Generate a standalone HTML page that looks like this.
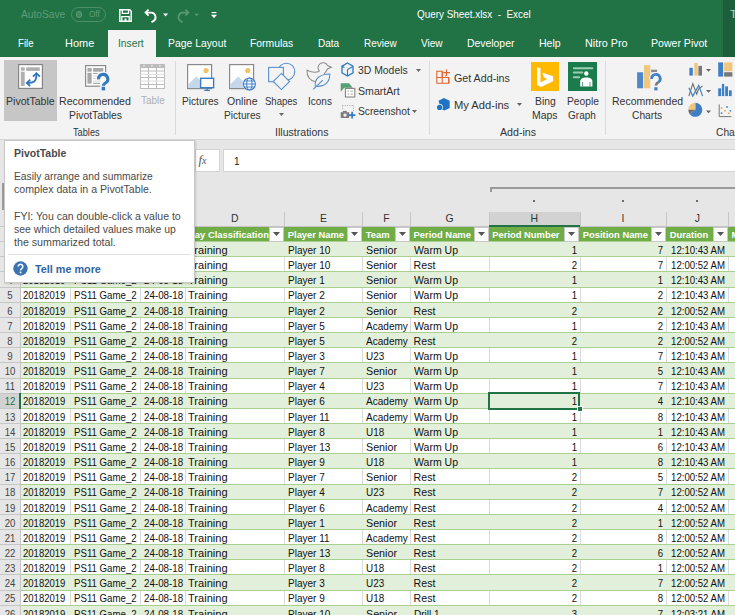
<!DOCTYPE html>
<html><head><meta charset="utf-8"><style>
html,body{margin:0;padding:0;}
body{width:735px;height:615px;overflow:hidden;position:relative;background:#fff;font-family:"Liberation Sans", sans-serif;}
.r,.t{position:absolute;box-sizing:content-box;}
.t{white-space:nowrap;line-height:1;}
svg.r{display:block;overflow:visible;}
</style></head><body>
<div class="r" style="left:0px;top:0px;width:735px;height:57px;background:#217346;"></div>
<div class="r" style="left:723px;top:0px;width:12px;height:57px;background:#1d5f3a;"></div>
<div class="t" style="left:20.90px;top:9.09px;font-size:11px;color:#5e9c77;font-weight:normal;transform:scaleX(0.9266);transform-origin:0 0;">AutoSave</div>
<div class="r" style="left:71px;top:7px;width:32.5px;height:12.5px;border:1px solid #4f9069;border-radius:7.5px;"></div>
<div class="r" style="left:75.8px;top:11.4px;width:4.4px;height:4.4px;border:1px solid #5e9c77;border-radius:50%;background:#3f8a5c;"></div>
<div class="t" style="left:88.60px;top:10.29px;font-size:8.4px;color:#5e9c77;font-weight:normal;transform:scaleX(0.9775);transform-origin:0 0;">Off</div>
<svg class="r" style="left:119px;top:9px" width="13" height="13" viewBox="0 0 13 13">
<path d="M0.8 0.8h10l1.4 1.4v10H0.8z" fill="none" stroke="#fff" stroke-width="1.5"/>
<path d="M3.3 0.8v3.6h6.2V0.8" fill="none" stroke="#fff" stroke-width="1.3"/>
<path d="M2.8 12.2V7.6h7.4v4.6" fill="none" stroke="#fff" stroke-width="1.3"/>
<rect x="5.5" y="9.6" width="2" height="2.6" fill="#fff"/>
</svg>
<svg class="r" style="left:140px;top:5px" width="80" height="20" viewBox="0 0 80 20">
<path d="M6.5 7.6H11.2A4.6 4.6 0 0 1 13.2 16.2L11.5 17.2" fill="none" stroke="#fff" stroke-width="1.9"/>
<path d="M8.6 4.6L5.6 7.6 8.6 10.6" fill="none" stroke="#fff" stroke-width="1.9"/>
<path d="M23 8.6h5.2l-2.6 2.8z" fill="#fff"/>
<path d="M47.5 7.6H42.8A4.6 4.6 0 0 0 40.8 16.2L42.5 17.2" fill="none" stroke="#5a9874" stroke-width="1.7"/>
<path d="M45.4 4.6L48.4 7.6 45.4 10.6" fill="none" stroke="#5a9874" stroke-width="1.7"/>
<path d="M54.5 8.8h4.4l-2.2 2.4z" fill="#5a9874"/>
</svg>
<svg class="r" style="left:211px;top:12px" width="6" height="7"><rect x="0.6" y="0" width="4.8" height="1.2" fill="#fff"/><path d="M0 2.8h6l-3 3.4z" fill="#fff"/></svg>
<div class="t" style="left:416.80px;top:8.79px;font-size:11px;color:#fff;font-weight:normal;transform:scaleX(0.8985);transform-origin:0 0;">Query Sheet.xlsx&nbsp; -&nbsp; Excel</div>
<div class="t" style="left:729.50px;top:8.89px;font-size:11px;color:#b8d4c2;font-weight:normal;transform:scaleX(1.0330);transform-origin:0 0;">Ta</div>
<div class="r" style="left:108px;top:30px;width:48px;height:27px;background:#f3f3f3;"></div>
<div class="t" style="left:17.80px;top:38.29px;font-size:11px;color:#fff;font-weight:normal;transform:scaleX(0.8745);transform-origin:0 0;">File</div>
<div class="t" style="left:64.90px;top:38.29px;font-size:11px;color:#fff;font-weight:normal;transform:scaleX(0.9986);transform-origin:0 0;">Home</div>
<div class="t" style="left:118.20px;top:38.29px;font-size:11px;color:#217346;font-weight:normal;transform:scaleX(0.9343);transform-origin:0 0;">Insert</div>
<div class="t" style="left:167.80px;top:38.29px;font-size:11px;color:#fff;font-weight:normal;transform:scaleX(0.9438);transform-origin:0 0;">Page Layout</div>
<div class="t" style="left:250.20px;top:38.29px;font-size:11px;color:#fff;font-weight:normal;transform:scaleX(0.9424);transform-origin:0 0;">Formulas</div>
<div class="t" style="left:318.00px;top:38.29px;font-size:11px;color:#fff;font-weight:normal;transform:scaleX(0.9125);transform-origin:0 0;">Data</div>
<div class="t" style="left:363.70px;top:38.29px;font-size:11px;color:#fff;font-weight:normal;transform:scaleX(0.9067);transform-origin:0 0;">Review</div>
<div class="t" style="left:420.80px;top:38.29px;font-size:11px;color:#fff;font-weight:normal;transform:scaleX(0.9136);transform-origin:0 0;">View</div>
<div class="t" style="left:466.70px;top:38.29px;font-size:11px;color:#fff;font-weight:normal;transform:scaleX(0.9454);transform-origin:0 0;">Developer</div>
<div class="t" style="left:538.60px;top:38.29px;font-size:11px;color:#fff;font-weight:normal;transform:scaleX(0.9592);transform-origin:0 0;">Help</div>
<div class="t" style="left:584.80px;top:38.29px;font-size:11px;color:#fff;font-weight:normal;transform:scaleX(0.9816);transform-origin:0 0;">Nitro Pro</div>
<div class="t" style="left:651.40px;top:38.29px;font-size:11px;color:#fff;font-weight:normal;transform:scaleX(0.9593);transform-origin:0 0;">Power Pivot</div>
<div class="r" style="left:0px;top:57px;width:735px;height:82px;background:#f3f3f3;"></div>
<div class="r" style="left:0px;top:139px;width:735px;height:1px;background:#d6d6d6;"></div>
<div class="r" style="left:4px;top:60px;width:53px;height:61px;background:#c6c6c6;"></div>
<svg class="r" style="left:18px;top:64px" width="25" height="25" viewBox="0 0 25 25">
<rect x="0.6" y="0.6" width="23.8" height="23.8" fill="#fff" stroke="#858585" stroke-width="1.2"/>
<rect x="2.8" y="3.3" width="3.9" height="3.4" fill="#b0b0b0"/>
<rect x="2.8" y="7.7" width="3.9" height="14.3" fill="#b0b0b0"/>
<rect x="8.2" y="3.3" width="13.6" height="3.6" fill="#b0b0b0"/>
<path d="M18.4 10C18.4 16.5 17 18.9 9.7 18.9" fill="none" stroke="#2e75c0" stroke-width="1.8"/>
<path d="M15 12.6L18.4 9.2 21.8 12.6" fill="none" stroke="#2e75c0" stroke-width="1.8"/>
<path d="M12.2 15.6L8.7 18.9 12.2 22.2" fill="none" stroke="#2e75c0" stroke-width="1.8"/>
</svg>
<div class="t" style="left:5.70px;top:95.86px;font-size:10.8px;color:#333;font-weight:normal;transform:scaleX(0.9774);transform-origin:0 0;">PivotTable</div>
<svg class="r" style="left:80px;top:60px" width="35" height="35" viewBox="0 0 35 35">
<rect x="5.6" y="5.6" width="20" height="20.6" fill="#fff" stroke="#8a8a8a" stroke-width="1.2"/>
<rect x="7.4" y="8" width="4.3" height="3.7" fill="#a8a8a8"/>
<rect x="7.4" y="12.8" width="4.3" height="10.8" fill="#a8a8a8"/>
<rect x="13.1" y="8" width="10.2" height="3.7" fill="#a8a8a8"/>
<path d="M13.1 13.4h4.5M13.1 23.3h7" stroke="#8a8a8a" stroke-width="0.9"/>
<path d="M13.1 15.9h8M13.1 18.5h8M13.1 21.1h8" stroke="#cfcfcf" stroke-width="0.9"/>
<path d="M18.6 19.4A4.6 4.6 0 1 1 25.5 23C24.1 23.9 23.3 24.5 23.3 25.8" fill="none" stroke="#f3f3f3" stroke-width="6"/>
<rect x="20.1" y="25.3" width="6.5" height="6.6" fill="#f3f3f3"/>
<path d="M18.6 19.4A4.6 4.6 0 1 1 25.5 23C24.1 23.9 23.3 24.5 23.3 25.8" fill="none" stroke="#3278c0" stroke-width="3.1"/>
<rect x="21.6" y="26.8" width="3.5" height="3.6" fill="#3278c0"/>
</svg>
<div class="t" style="left:59.00px;top:95.56px;font-size:10.8px;color:#333;font-weight:normal;transform:scaleX(0.9818);transform-origin:0 0;">Recommended</div>
<div class="t" style="left:68.90px;top:109.76px;font-size:10.8px;color:#333;font-weight:normal;transform:scaleX(0.9597);transform-origin:0 0;">PivotTables</div>
<svg class="r" style="left:140px;top:64px" width="25" height="25" viewBox="0 0 25 25">
<rect x="0.5" y="0.5" width="24" height="24" fill="#fff" stroke="#bdbdbd"/>
<rect x="0.5" y="0.5" width="24" height="3.6" fill="#bdbdbd"/>
<path d="M2.8 1.6h2.4l-1.2 1.2zM10.8 1.6h2.4l-1.2 1.2zM18.8 1.6h2.4l-1.2 1.2z" fill="#fff"/>
<path d="M0.5 7h24M0.5 13.5h24M0.5 20.5h24M8.5 0.5v24M16.5 0.5v24" stroke="#bdbdbd" stroke-width="1"/>
<path d="M0.5 10.3h24M0.5 17h24" stroke="#dedede" stroke-width="1"/>
</svg>
<div class="t" style="left:141.00px;top:95.06px;font-size:10.8px;color:#b0b0b0;font-weight:normal;transform:scaleX(0.9180);transform-origin:0 0;">Table</div>
<div class="t" style="left:73.30px;top:126.66px;font-size:10.8px;color:#333;font-weight:normal;transform:scaleX(0.8521);transform-origin:0 0;">Tables</div>
<div class="r" style="left:175px;top:61px;width:1px;height:74px;background:#dadada;"></div>
<svg class="r" style="left:187px;top:64px" width="30" height="28" viewBox="0 0 30 28">
<rect x="0.6" y="0.6" width="24" height="24" fill="#fff" stroke="#8a8a8a" stroke-width="1.2"/>
<circle cx="19" cy="6.5" r="2.6" fill="#f2c26a"/>
<path d="M1.2 24V20.5L9.2 12.5 13.5 16.5V24z" fill="#c5d8eb"/>
<rect x="13.6" y="14.3" width="13" height="9.4" fill="#fff" stroke="#3a7cc2" stroke-width="1.4"/>
<path d="M20.1 23.7v2.4M17.3 26.3h5.6" stroke="#3a7cc2" stroke-width="1.2"/>
</svg>
<div class="t" style="left:181.60px;top:95.56px;font-size:10.8px;color:#333;font-weight:normal;transform:scaleX(0.9382);transform-origin:0 0;">Pictures</div>
<svg class="r" style="left:229px;top:64px" width="30" height="28" viewBox="0 0 30 28">
<rect x="0.6" y="0.6" width="24" height="24" fill="#fff" stroke="#8a8a8a" stroke-width="1.2"/>
<circle cx="18.8" cy="6.5" r="2.6" fill="#f2c26a"/>
<path d="M1.2 24V20.5L9.2 12.5 14 17V24z" fill="#c5d8eb"/>
<circle cx="20.4" cy="20" r="6.6" fill="#fff"/>
<circle cx="20.4" cy="20" r="6" fill="none" stroke="#3a7cc2" stroke-width="1.1"/>
<ellipse cx="20.4" cy="20" rx="2.7" ry="6" fill="none" stroke="#3a7cc2" stroke-width="1"/>
<path d="M14.4 20h12M15.2 17h10.4M15.2 23h10.4" stroke="#3a7cc2" stroke-width="0.9"/>
</svg>
<div class="t" style="left:227.00px;top:95.56px;font-size:10.8px;color:#333;font-weight:normal;transform:scaleX(0.9770);transform-origin:0 0;">Online</div>
<div class="t" style="left:223.70px;top:109.86px;font-size:10.8px;color:#333;font-weight:normal;transform:scaleX(0.9382);transform-origin:0 0;">Pictures</div>
<svg class="r" style="left:262px;top:58px" width="38" height="37" viewBox="0 0 38 37">
<circle cx="24.4" cy="13.6" r="8.4" fill="#f3f3f3" stroke="#5b8fcf" stroke-width="1.1"/>
<rect x="6.6" y="9.4" width="14.8" height="14.3" fill="#f3f3f3" stroke="#5b8fcf" stroke-width="1.1"/>
<path d="M19.4 15.4L27.6 23.5 19.4 31.6 11.2 23.5z" fill="#f3f3f3" stroke="#5b8fcf" stroke-width="1.1"/>
</svg>
<div class="t" style="left:265.20px;top:95.56px;font-size:10.8px;color:#333;font-weight:normal;transform:scaleX(0.8846);transform-origin:0 0;">Shapes</div>
<svg class="r" style="left:279px;top:113px" width="5" height="3"><path d="M0 0h5l-2.5 3z" fill="#666"/></svg>
<svg class="r" style="left:262px;top:58px" width="75" height="37" viewBox="0 0 75 37">
<path d="M57.5 13.2A5 5 0 1 1 65.6 7.6L69.4 9.2 65.4 11C64.5 13 63.5 14.5 62 16M57.5 13.2C54 14.8 49 14.2 45 12.2C44.8 18 48 22.5 53.5 23.8" fill="none" stroke="#8c8c8c" stroke-width="1.05"/>
<path d="M53.3 28.3C52.2 20.5 58 16.2 67.8 16C68 24.2 62.5 29.2 53.3 28.3z" fill="#f3f3f3" stroke="#5b8fcf" stroke-width="1.1"/>
<path d="M51.2 31.4L60.8 22.2" stroke="#5b8fcf" stroke-width="1.1"/>
</svg>
<div class="t" style="left:307.60px;top:95.56px;font-size:10.8px;color:#333;font-weight:normal;transform:scaleX(0.9259);transform-origin:0 0;">Icons</div>
<div class="t" style="left:274.90px;top:126.66px;font-size:10.8px;color:#333;font-weight:normal;transform:scaleX(0.9795);transform-origin:0 0;">Illustrations</div>
<svg class="r" style="left:341px;top:62px" width="13" height="15" viewBox="0 0 13 15">
<path d="M6.5 1L12 4.1v6.8L6.5 14 1 10.9V4.1z" fill="none" stroke="#2e7bc4" stroke-width="1.3"/>
<path d="M6.5 7.6L12 4.4M6.5 7.6V14M1.2 4.2l2.3 1.4" fill="none" stroke="#2e7bc4" stroke-width="1.1"/>
<circle cx="1.6" cy="4.5" r="1" fill="#2e7bc4"/>
</svg>
<div class="t" style="left:357.80px;top:65.16px;font-size:10.8px;color:#333;font-weight:normal;transform:scaleX(0.9628);transform-origin:0 0;">3D Models</div>
<svg class="r" style="left:416px;top:68.5px" width="5" height="3"><path d="M0 0h5l-2.5 3z" fill="#666"/></svg>
<svg class="r" style="left:340px;top:83px" width="16" height="15" viewBox="0 0 16 15">
<path d="M0.7 0.2h8.4l3.6 4.6H4.3L0.7 8.7z" fill="#55a074"/>
<rect x="5.4" y="5.4" width="9.4" height="8.6" fill="#fff" stroke="#858585" stroke-width="1.1"/>
<path d="M7.6 8.2h1.6M10.6 8.2h2.2M7.6 11.1h1.6M10.6 11.1h2.2" stroke="#9a9a9a" stroke-width="0.9"/>
</svg>
<div class="t" style="left:357.80px;top:85.86px;font-size:10.8px;color:#333;font-weight:normal;transform:scaleX(0.9812);transform-origin:0 0;">SmartArt</div>
<svg class="r" style="left:340px;top:104px" width="16" height="15" viewBox="0 0 16 15">
<path d="M2.5 1.5h11M13.5 1.5v6M2.5 1.5v4" fill="none" stroke="#a0a0a0" stroke-width="0.9" stroke-dasharray="1 1.3"/>
<rect x="0.7" y="8.2" width="8.5" height="5.8" fill="#7d7d7d"/>
<rect x="2.8" y="6.9" width="4" height="1.6" fill="#7d7d7d"/>
<circle cx="5" cy="11.1" r="1.7" fill="#f3f3f3"/>
<path d="M12.1 7.8v6.6M8.8 11.1h6.6" stroke="#2e7bc4" stroke-width="1.7"/>
</svg>
<div class="t" style="left:357.80px;top:106.16px;font-size:10.8px;color:#333;font-weight:normal;transform:scaleX(0.9482);transform-origin:0 0;">Screenshot</div>
<svg class="r" style="left:412px;top:110px" width="5" height="3"><path d="M0 0h5l-2.5 3z" fill="#666"/></svg>
<div class="r" style="left:429px;top:61px;width:1px;height:74px;background:#dadada;"></div>
<svg class="r" style="left:430px;top:60px" width="40" height="55" viewBox="0 0 40 55">
<path d="M6.8 11.2h5.4v12H6.8zM6.8 17.4h12v5.8h-6.8" fill="none" stroke="#e2612a" stroke-width="1.05"/>
<path d="M12.2 17.4V11.2M18.8 17.4v5.8" fill="none" stroke="#e2612a" stroke-width="1.05"/>
<path d="M12.2 11.2h1.6M15.6 17.4v-2.2" fill="none" stroke="#eda36a" stroke-width="1"/>
<path d="M16.5 9.4v6.7M13.2 12.6h6.7" stroke="#e2612a" stroke-width="1.1"/>
<path d="M13.9 38L19.7 40.7V47.9L14.3 50.5 11.2 49.2 8.5 40.7z" fill="#1f74c6"/>
<circle cx="9.6" cy="47.4" r="3.3" fill="#f3f3f3"/>
<circle cx="9.6" cy="47.4" r="2.6" fill="#1f74c6"/>
</svg>
<div class="t" style="left:453.50px;top:72.56px;font-size:10.8px;color:#333;font-weight:normal;transform:scaleX(0.9906);transform-origin:0 0;">Get Add-ins</div>
<div class="t" style="left:453.50px;top:100.06px;font-size:10.8px;color:#333;font-weight:normal;transform:scaleX(1.0334);transform-origin:0 0;">My Add-ins</div>
<svg class="r" style="left:517px;top:103px" width="5" height="3"><path d="M0 0h5l-2.5 3z" fill="#666"/></svg>
<div class="r" style="left:531px;top:62px;width:28px;height:29px;background:#ffb900;"></div>
<svg class="r" style="left:528px;top:60px" width="72" height="34" viewBox="0 0 72 34">
<path d="M9 7L12.5 8.2V22.6L19.2 18.9 16.1 17.4 14.4 12.8 25.2 16.3V21.2L13 26.9 9 24.7z" fill="#fff"/>
</svg>
<div class="t" style="left:534.50px;top:95.56px;font-size:10.8px;color:#333;font-weight:normal;transform:scaleX(0.9577);transform-origin:0 0;">Bing</div>
<div class="t" style="left:531.70px;top:109.86px;font-size:10.8px;color:#333;font-weight:normal;transform:scaleX(0.9694);transform-origin:0 0;">Maps</div>
<div class="r" style="left:568px;top:62px;width:29px;height:29px;background:#1a7c4c;"></div>
<svg class="r" style="left:528px;top:60px" width="72" height="34" viewBox="0 0 72 34">
<path d="M45.8 8.3h18.6M45.8 12.5h8.6M45.8 17.2h5.4" stroke="#9dcdb3" stroke-width="1.9" stroke-linecap="round"/>
<circle cx="58.3" cy="13.5" r="2.2" fill="#fff"/>
<path d="M52.2 26.6V21.5c0-2.6 2.4-4 6.1-4s6.1 1.4 6.1 4v5.1z" fill="#fff"/>
<path d="M54.6 22v4.6M62 22v4.6" stroke="#1a7c4c" stroke-width="0.7"/>
</svg>
<div class="t" style="left:566.70px;top:95.56px;font-size:10.8px;color:#333;font-weight:normal;transform:scaleX(0.9516);transform-origin:0 0;">People</div>
<div class="t" style="left:568.30px;top:109.86px;font-size:10.8px;color:#333;font-weight:normal;transform:scaleX(0.9296);transform-origin:0 0;">Graph</div>
<div class="t" style="left:499.70px;top:126.66px;font-size:10.8px;color:#333;font-weight:normal;transform:scaleX(0.9831);transform-origin:0 0;">Add-ins</div>
<div class="r" style="left:605px;top:61px;width:1px;height:74px;background:#dadada;"></div>
<svg class="r" style="left:630px;top:58px" width="35" height="35" viewBox="0 0 35 35">
<rect x="7.1" y="14.3" width="6" height="16" fill="#4f88c9"/>
<rect x="14" y="7.1" width="6.3" height="23.2" fill="#f0c77e"/>
<rect x="21.1" y="11.7" width="6" height="2.6" fill="#8a8a8a"/>
<path d="M21.6 21A4.3 4.3 0 1 1 28.1 24.4C26.6 25.4 25.9 26 25.9 27.6" fill="none" stroke="#f3f3f3" stroke-width="5"/>
<rect x="22.8" y="27.5" width="6.2" height="6.2" fill="#f3f3f3"/>
<path d="M21.6 21A4.3 4.3 0 1 1 28.1 24.4" fill="none" stroke="#3f80c6" stroke-width="2.7"/>
<path d="M28.1 24.4C26.6 25.4 25.9 26 25.9 27.6" fill="none" stroke="#777" stroke-width="2.7"/>
<rect x="24.3" y="29.2" width="3.2" height="3.2" fill="#3f80c6"/>
</svg>
<div class="t" style="left:611.70px;top:95.56px;font-size:10.8px;color:#333;font-weight:normal;transform:scaleX(0.9709);transform-origin:0 0;">Recommended</div>
<div class="t" style="left:632.40px;top:109.76px;font-size:10.8px;color:#333;font-weight:normal;transform:scaleX(0.9463);transform-origin:0 0;">Charts</div>
<svg class="r" style="left:685px;top:60px" width="50" height="60" viewBox="0 0 50 60">
<rect x="4.4" y="7.8" width="3.4" height="7.8" fill="#3f7fc6"/>
<rect x="9.3" y="2.9" width="3.4" height="12.7" fill="#f0c77e"/>
<rect x="13.4" y="5.9" width="3.6" height="9.7" fill="#777"/>
<path d="M3.9 36.1L7.8 23.6 11.7 34.2 13.6 29 17.6 25.9" fill="none" stroke="#6e6e6e" stroke-width="1.1"/>
<path d="M3.9 27.8L7.8 36.1 13.7 25.4 17.6 36.1" fill="none" stroke="#3f7fc6" stroke-width="1.2"/>
<path d="M10.3 49.8V42.8A7 7 0 1 1 4.6 53.9z" fill="#3f7fc6"/>
<path d="M10.3 49.8H3.3A7 7 0 0 1 10.3 42.8z" fill="#f0c77e"/>
<path d="M10.3 49.8H3.3A7 7 0 0 0 4.6 53.9z" fill="#6e6e6e"/>
<rect x="33.2" y="2.4" width="4.9" height="14.2" fill="#3f7fc6"/>
<rect x="39.1" y="2.4" width="8.3" height="8.8" fill="#f0c77e"/>
<rect x="39.1" y="12.2" width="8.3" height="4.4" fill="#777"/>
<rect x="33.2" y="28.3" width="2.9" height="7.8" fill="#3f7fc6"/>
<rect x="36.9" y="23.9" width="2.3" height="12.2" fill="#3f7fc6"/>
<rect x="40.2" y="26.4" width="2.8" height="9.7" fill="#3f7fc6"/>
<rect x="43.9" y="30.3" width="2.8" height="5.8" fill="#3f7fc6"/>
<path d="M34.2 44.4V56.6H46.4" fill="none" stroke="#777" stroke-width="1"/>
<circle cx="42" cy="46.9" r="0.9" fill="#3f7fc6"/><circle cx="36.6" cy="47.9" r="0.9" fill="#f0a848"/><circle cx="40" cy="50.8" r="0.9" fill="#f0a848"/><circle cx="45.4" cy="50.8" r="0.9" fill="#3f7fc6"/><circle cx="36.6" cy="53.2" r="0.9" fill="#3f7fc6"/><circle cx="43.9" cy="53.2" r="0.9" fill="#f0a848"/>
<path d="M21 9h5l-2.5 2.8zM21 30h5l-2.5 2.8zM21 50.5h5l-2.5 2.8z" fill="#666"/>
</svg>
<div class="t" style="left:715.50px;top:126.66px;font-size:10.8px;color:#333;font-weight:normal;transform:scaleX(0.9463);transform-origin:0 0;">Charts</div>
<div class="r" style="left:0px;top:140px;width:735px;height:472px;background:#e6e6e6;"></div>
<div class="r" style="left:2px;top:183px;width:2px;height:27px;background:#9a9a9a;"></div>
<div class="r" style="left:195px;top:149px;width:23px;height:21px;background:#fff;border:1px solid #d4d4d4;"></div>
<div class="r" style="left:223px;top:149px;width:520px;height:21px;background:#fff;border:1px solid #d4d4d4;"></div>
<div class="t" style="left:198.50px;top:153.92px;font-size:12.5px;color:#555;font-weight:normal;font-family:'Liberation Serif',serif;"><i>f</i><i style="font-size:10px">x</i></div>
<div class="t" style="left:234.00px;top:156.53px;font-size:10px;color:#222;font-weight:normal;">1</div>
<div class="r" style="left:490px;top:186.5px;width:245px;height:2px;background:#9a9a9a;"></div>
<div class="r" style="left:490px;top:186.5px;width:2px;height:5.5px;background:#9a9a9a;"></div>
<div class="r" style="left:533px;top:200px;width:2px;height:2px;background:#6e6e6e;"></div>
<div class="r" style="left:622px;top:200px;width:2px;height:2px;background:#6e6e6e;"></div>
<div class="r" style="left:696px;top:200px;width:2px;height:2px;background:#6e6e6e;"></div>
<div class="r" style="left:489px;top:212px;width:91px;height:13px;background:#d2d2d2;"></div>
<div class="r" style="left:489px;top:224.5px;width:91px;height:2px;background:#217346;"></div>
<div class="r" style="left:70px;top:212px;width:1px;height:14px;background:#c6c6c6;"></div>
<div class="r" style="left:140px;top:212px;width:1px;height:14px;background:#c6c6c6;"></div>
<div class="r" style="left:185px;top:212px;width:1px;height:14px;background:#c6c6c6;"></div>
<div class="r" style="left:284px;top:212px;width:1px;height:14px;background:#c6c6c6;"></div>
<div class="r" style="left:362px;top:212px;width:1px;height:14px;background:#c6c6c6;"></div>
<div class="r" style="left:410px;top:212px;width:1px;height:14px;background:#c6c6c6;"></div>
<div class="r" style="left:489px;top:212px;width:1px;height:14px;background:#c6c6c6;"></div>
<div class="r" style="left:580px;top:212px;width:1px;height:14px;background:#c6c6c6;"></div>
<div class="r" style="left:666px;top:212px;width:1px;height:14px;background:#c6c6c6;"></div>
<div class="r" style="left:728px;top:212px;width:1px;height:14px;background:#c6c6c6;"></div>
<div class="t" style="left:-154.25px;width:400px;text-align:center;top:213.50px;font-size:10.4px;color:#333;font-weight:normal;">A</div>
<div class="t" style="left:-94.50px;width:400px;text-align:center;top:213.50px;font-size:10.4px;color:#333;font-weight:normal;">B</div>
<div class="t" style="left:-37.35px;width:400px;text-align:center;top:213.50px;font-size:10.4px;color:#333;font-weight:normal;">C</div>
<div class="t" style="left:34.65px;width:400px;text-align:center;top:213.50px;font-size:10.4px;color:#333;font-weight:normal;">D</div>
<div class="t" style="left:123.45px;width:400px;text-align:center;top:213.50px;font-size:10.4px;color:#333;font-weight:normal;">E</div>
<div class="t" style="left:186.35px;width:400px;text-align:center;top:213.50px;font-size:10.4px;color:#333;font-weight:normal;">F</div>
<div class="t" style="left:249.65px;width:400px;text-align:center;top:213.50px;font-size:10.4px;color:#333;font-weight:normal;">G</div>
<div class="t" style="left:334.25px;width:400px;text-align:center;top:213.50px;font-size:10.4px;color:#2a3a30;font-weight:normal;">H</div>
<div class="t" style="left:422.95px;width:400px;text-align:center;top:213.50px;font-size:10.4px;color:#333;font-weight:normal;">I</div>
<div class="t" style="left:497.35px;width:400px;text-align:center;top:213.50px;font-size:10.4px;color:#333;font-weight:normal;">J</div>
<div class="t" style="left:564.15px;width:400px;text-align:center;top:213.50px;font-size:10.4px;color:#333;font-weight:normal;">K</div>
<div class="r" style="left:0px;top:226px;width:21px;height:400px;background:#e6e6e6;"></div>
<div class="r" style="left:21px;top:226px;width:714px;height:400px;background:#fff;"></div>
<div class="r" style="left:70px;top:226px;width:1px;height:400px;background:#dadada;"></div>
<div class="r" style="left:140px;top:226px;width:1px;height:400px;background:#dadada;"></div>
<div class="r" style="left:185px;top:226px;width:1px;height:400px;background:#dadada;"></div>
<div class="r" style="left:284px;top:226px;width:1px;height:400px;background:#dadada;"></div>
<div class="r" style="left:362px;top:226px;width:1px;height:400px;background:#dadada;"></div>
<div class="r" style="left:410px;top:226px;width:1px;height:400px;background:#dadada;"></div>
<div class="r" style="left:489px;top:226px;width:1px;height:400px;background:#dadada;"></div>
<div class="r" style="left:580px;top:226px;width:1px;height:400px;background:#dadada;"></div>
<div class="r" style="left:666px;top:226px;width:1px;height:400px;background:#dadada;"></div>
<div class="r" style="left:728px;top:226px;width:1px;height:400px;background:#dadada;"></div>
<div class="r" style="left:21px;top:226px;width:714px;height:15px;background:#70ad47;"></div>
<div class="r" style="left:0px;top:226px;width:20px;height:1px;background:#c6c6c6;"></div>
<div class="r" style="left:21px;top:241px;width:714px;height:16px;background:#e2efda;"></div>
<div class="r" style="left:21px;top:241px;width:714px;height:1px;background:#a9d08e;"></div>
<div class="r" style="left:21px;top:256px;width:714px;height:1px;background:#a9d08e;"></div>
<div class="r" style="left:0px;top:241px;width:20px;height:1px;background:#c6c6c6;"></div>
<div class="r" style="left:0px;top:256px;width:20px;height:1px;background:#c6c6c6;"></div>
<div class="r" style="left:21px;top:271px;width:714px;height:17px;background:#e2efda;"></div>
<div class="r" style="left:21px;top:271px;width:714px;height:1px;background:#a9d08e;"></div>
<div class="r" style="left:21px;top:287px;width:714px;height:1px;background:#a9d08e;"></div>
<div class="r" style="left:0px;top:271px;width:20px;height:1px;background:#c6c6c6;"></div>
<div class="r" style="left:0px;top:287px;width:20px;height:1px;background:#c6c6c6;"></div>
<div class="r" style="left:21px;top:302px;width:714px;height:16px;background:#e2efda;"></div>
<div class="r" style="left:21px;top:302px;width:714px;height:1px;background:#a9d08e;"></div>
<div class="r" style="left:21px;top:317px;width:714px;height:1px;background:#a9d08e;"></div>
<div class="r" style="left:0px;top:302px;width:20px;height:1px;background:#c6c6c6;"></div>
<div class="r" style="left:0px;top:317px;width:20px;height:1px;background:#c6c6c6;"></div>
<div class="r" style="left:21px;top:332px;width:714px;height:16px;background:#e2efda;"></div>
<div class="r" style="left:21px;top:332px;width:714px;height:1px;background:#a9d08e;"></div>
<div class="r" style="left:21px;top:347px;width:714px;height:1px;background:#a9d08e;"></div>
<div class="r" style="left:0px;top:332px;width:20px;height:1px;background:#c6c6c6;"></div>
<div class="r" style="left:0px;top:347px;width:20px;height:1px;background:#c6c6c6;"></div>
<div class="r" style="left:21px;top:362px;width:714px;height:17px;background:#e2efda;"></div>
<div class="r" style="left:21px;top:362px;width:714px;height:1px;background:#a9d08e;"></div>
<div class="r" style="left:21px;top:378px;width:714px;height:1px;background:#a9d08e;"></div>
<div class="r" style="left:0px;top:362px;width:20px;height:1px;background:#c6c6c6;"></div>
<div class="r" style="left:0px;top:378px;width:20px;height:1px;background:#c6c6c6;"></div>
<div class="r" style="left:21px;top:393px;width:714px;height:16px;background:#e2efda;"></div>
<div class="r" style="left:21px;top:393px;width:714px;height:1px;background:#a9d08e;"></div>
<div class="r" style="left:21px;top:408px;width:714px;height:1px;background:#a9d08e;"></div>
<div class="r" style="left:0px;top:393px;width:20px;height:1px;background:#c6c6c6;"></div>
<div class="r" style="left:0px;top:408px;width:20px;height:1px;background:#c6c6c6;"></div>
<div class="r" style="left:21px;top:423px;width:714px;height:16px;background:#e2efda;"></div>
<div class="r" style="left:21px;top:423px;width:714px;height:1px;background:#a9d08e;"></div>
<div class="r" style="left:21px;top:438px;width:714px;height:1px;background:#a9d08e;"></div>
<div class="r" style="left:0px;top:423px;width:20px;height:1px;background:#c6c6c6;"></div>
<div class="r" style="left:0px;top:438px;width:20px;height:1px;background:#c6c6c6;"></div>
<div class="r" style="left:21px;top:453px;width:714px;height:16px;background:#e2efda;"></div>
<div class="r" style="left:21px;top:453px;width:714px;height:1px;background:#a9d08e;"></div>
<div class="r" style="left:21px;top:468px;width:714px;height:1px;background:#a9d08e;"></div>
<div class="r" style="left:0px;top:453px;width:20px;height:1px;background:#c6c6c6;"></div>
<div class="r" style="left:0px;top:468px;width:20px;height:1px;background:#c6c6c6;"></div>
<div class="r" style="left:21px;top:484px;width:714px;height:16px;background:#e2efda;"></div>
<div class="r" style="left:21px;top:484px;width:714px;height:1px;background:#a9d08e;"></div>
<div class="r" style="left:21px;top:499px;width:714px;height:1px;background:#a9d08e;"></div>
<div class="r" style="left:0px;top:484px;width:20px;height:1px;background:#c6c6c6;"></div>
<div class="r" style="left:0px;top:499px;width:20px;height:1px;background:#c6c6c6;"></div>
<div class="r" style="left:21px;top:514px;width:714px;height:16px;background:#e2efda;"></div>
<div class="r" style="left:21px;top:514px;width:714px;height:1px;background:#a9d08e;"></div>
<div class="r" style="left:21px;top:529px;width:714px;height:1px;background:#a9d08e;"></div>
<div class="r" style="left:0px;top:514px;width:20px;height:1px;background:#c6c6c6;"></div>
<div class="r" style="left:0px;top:529px;width:20px;height:1px;background:#c6c6c6;"></div>
<div class="r" style="left:21px;top:544px;width:714px;height:16px;background:#e2efda;"></div>
<div class="r" style="left:21px;top:544px;width:714px;height:1px;background:#a9d08e;"></div>
<div class="r" style="left:21px;top:559px;width:714px;height:1px;background:#a9d08e;"></div>
<div class="r" style="left:0px;top:544px;width:20px;height:1px;background:#c6c6c6;"></div>
<div class="r" style="left:0px;top:559px;width:20px;height:1px;background:#c6c6c6;"></div>
<div class="r" style="left:21px;top:574px;width:714px;height:17px;background:#e2efda;"></div>
<div class="r" style="left:21px;top:574px;width:714px;height:1px;background:#a9d08e;"></div>
<div class="r" style="left:21px;top:590px;width:714px;height:1px;background:#a9d08e;"></div>
<div class="r" style="left:0px;top:574px;width:20px;height:1px;background:#c6c6c6;"></div>
<div class="r" style="left:0px;top:590px;width:20px;height:1px;background:#c6c6c6;"></div>
<div class="r" style="left:21px;top:605px;width:714px;height:16px;background:#e2efda;"></div>
<div class="r" style="left:21px;top:605px;width:714px;height:1px;background:#a9d08e;"></div>
<div class="r" style="left:21px;top:620px;width:714px;height:1px;background:#a9d08e;"></div>
<div class="r" style="left:0px;top:605px;width:20px;height:1px;background:#c6c6c6;"></div>
<div class="r" style="left:20px;top:226px;width:1px;height:400px;background:#c6c6c6;"></div>
<div class="r" style="left:21px;top:226px;width:714px;height:1px;background:#c4c4c4;"></div>
<div class="r" style="left:489px;top:225px;width:91px;height:2px;background:#217346;"></div>
<div class="r" style="left:0px;top:394px;width:19px;height:14px;background:#d2d2d2;"></div>
<div class="r" style="left:19px;top:393px;width:2px;height:16px;background:#217346;"></div>
<div class="t" style="left:23.10px;top:230.04px;font-size:9.4px;color:#fff;font-weight:bold;transform:scaleX(1.0000);transform-origin:0 0;">Season</div>
<div class="t" style="left:73.80px;top:230.04px;font-size:9.4px;color:#fff;font-weight:bold;transform:scaleX(1.0000);transform-origin:0 0;">Fixture Name</div>
<div class="t" style="left:143.80px;top:230.04px;font-size:9.4px;color:#fff;font-weight:bold;transform:scaleX(1.0000);transform-origin:0 0;">Date</div>
<div class="t" style="left:188.10px;top:230.04px;font-size:9.4px;color:#fff;font-weight:bold;transform:scaleX(1.0000);transform-origin:0 0;">Day Classification</div>
<div class="t" style="left:287.80px;top:230.04px;font-size:9.4px;color:#fff;font-weight:bold;transform:scaleX(1.0000);transform-origin:0 0;">Player Name</div>
<div class="t" style="left:365.70px;top:230.04px;font-size:9.4px;color:#fff;font-weight:bold;transform:scaleX(1.0000);transform-origin:0 0;">Team</div>
<div class="t" style="left:413.60px;top:230.04px;font-size:9.4px;color:#fff;font-weight:bold;transform:scaleX(1.0000);transform-origin:0 0;">Period Name</div>
<div class="t" style="left:492.30px;top:230.04px;font-size:9.4px;color:#fff;font-weight:bold;transform:scaleX(1.0000);transform-origin:0 0;">Period Number</div>
<div class="t" style="left:582.80px;top:230.04px;font-size:9.4px;color:#fff;font-weight:bold;transform:scaleX(1.0000);transform-origin:0 0;">Position Name</div>
<div class="t" style="left:669.70px;top:230.04px;font-size:9.4px;color:#fff;font-weight:bold;transform:scaleX(1.0000);transform-origin:0 0;">Duration</div>
<div class="t" style="left:731.60px;top:230.04px;font-size:9.4px;color:#fff;font-weight:bold;transform:scaleX(1.0000);transform-origin:0 0;">M</div>
<div class="r" style="left:55px;top:227px;width:13px;height:12.5px;background:#fbfbfb;border:1px solid #c8c8c8;"></div>
<svg class="r" style="left:59px;top:232px" width="7" height="4"><path d="M0 0h7l-3.5 4z" fill="#555"/></svg>
<div class="r" style="left:125px;top:227px;width:13px;height:12.5px;background:#fbfbfb;border:1px solid #c8c8c8;"></div>
<svg class="r" style="left:129px;top:232px" width="7" height="4"><path d="M0 0h7l-3.5 4z" fill="#555"/></svg>
<div class="r" style="left:169px;top:227px;width:13px;height:12.5px;background:#fbfbfb;border:1px solid #c8c8c8;"></div>
<svg class="r" style="left:173px;top:232px" width="7" height="4"><path d="M0 0h7l-3.5 4z" fill="#555"/></svg>
<div class="r" style="left:269px;top:227px;width:13px;height:12.5px;background:#fbfbfb;border:1px solid #c8c8c8;"></div>
<svg class="r" style="left:273px;top:232px" width="7" height="4"><path d="M0 0h7l-3.5 4z" fill="#555"/></svg>
<div class="r" style="left:347px;top:227px;width:13px;height:12.5px;background:#fbfbfb;border:1px solid #c8c8c8;"></div>
<svg class="r" style="left:351px;top:232px" width="7" height="4"><path d="M0 0h7l-3.5 4z" fill="#555"/></svg>
<div class="r" style="left:395px;top:227px;width:13px;height:12.5px;background:#fbfbfb;border:1px solid #c8c8c8;"></div>
<svg class="r" style="left:399px;top:232px" width="7" height="4"><path d="M0 0h7l-3.5 4z" fill="#555"/></svg>
<div class="r" style="left:474px;top:227px;width:13px;height:12.5px;background:#fbfbfb;border:1px solid #c8c8c8;"></div>
<svg class="r" style="left:478px;top:232px" width="7" height="4"><path d="M0 0h7l-3.5 4z" fill="#555"/></svg>
<div class="r" style="left:564px;top:227px;width:13px;height:12.5px;background:#fbfbfb;border:1px solid #c8c8c8;"></div>
<svg class="r" style="left:568px;top:232px" width="7" height="4"><path d="M0 0h7l-3.5 4z" fill="#555"/></svg>
<div class="r" style="left:651px;top:227px;width:13px;height:12.5px;background:#fbfbfb;border:1px solid #c8c8c8;"></div>
<svg class="r" style="left:655px;top:232px" width="7" height="4"><path d="M0 0h7l-3.5 4z" fill="#555"/></svg>
<div class="r" style="left:713px;top:227px;width:13px;height:12.5px;background:#fbfbfb;border:1px solid #c8c8c8;"></div>
<svg class="r" style="left:717px;top:232px" width="7" height="4"><path d="M0 0h7l-3.5 4z" fill="#555"/></svg>
<div class="t" style="left:23.10px;top:244.98px;font-size:10.6px;color:#111;font-weight:normal;transform:scaleX(0.8990);transform-origin:0 0;">20182019</div>
<div class="t" style="left:73.80px;top:244.98px;font-size:10.6px;color:#111;font-weight:normal;transform:scaleX(0.9120);transform-origin:0 0;">PS11 Game_2</div>
<div class="t" style="left:143.80px;top:244.98px;font-size:10.6px;color:#111;font-weight:normal;transform:scaleX(0.9240);transform-origin:0 0;">24-08-18</div>
<div class="t" style="left:188.10px;top:244.98px;font-size:10.6px;color:#111;font-weight:normal;transform:scaleX(1.0450);transform-origin:0 0;">Training</div>
<div class="t" style="left:287.80px;top:244.98px;font-size:10.6px;color:#111;font-weight:normal;transform:scaleX(0.9460);transform-origin:0 0;">Player 10</div>
<div class="t" style="left:365.70px;top:244.98px;font-size:10.6px;color:#111;font-weight:normal;transform:scaleX(1.0120);transform-origin:0 0;">Senior</div>
<div class="t" style="left:413.60px;top:244.98px;font-size:10.6px;color:#111;font-weight:normal;transform:scaleX(0.9940);transform-origin:0 0;">Warm Up</div>
<div class="t" style="left:176.50px;width:400px;text-align:right;top:244.98px;font-size:10.6px;color:#111;font-weight:normal;transform:scaleX(0.9050);transform-origin:100% 0;">1</div>
<div class="t" style="left:263.40px;width:400px;text-align:right;top:244.98px;font-size:10.6px;color:#111;font-weight:normal;transform:scaleX(0.9050);transform-origin:100% 0;">7</div>
<div class="t" style="left:325.30px;width:400px;text-align:right;top:244.98px;font-size:10.6px;color:#111;font-weight:normal;transform:scaleX(0.9070);transform-origin:100% 0;">12:10:43 AM</div>
<div class="t" style="left:-190.00px;width:400px;text-align:center;top:244.98px;font-size:10.6px;color:#444;font-weight:normal;transform:scaleX(0.9050);transform-origin:50% 0;">2</div>
<div class="t" style="left:23.10px;top:260.13px;font-size:10.6px;color:#111;font-weight:normal;transform:scaleX(0.8990);transform-origin:0 0;">20182019</div>
<div class="t" style="left:73.80px;top:260.13px;font-size:10.6px;color:#111;font-weight:normal;transform:scaleX(0.9120);transform-origin:0 0;">PS11 Game_2</div>
<div class="t" style="left:143.80px;top:260.13px;font-size:10.6px;color:#111;font-weight:normal;transform:scaleX(0.9240);transform-origin:0 0;">24-08-18</div>
<div class="t" style="left:188.10px;top:260.13px;font-size:10.6px;color:#111;font-weight:normal;transform:scaleX(1.0450);transform-origin:0 0;">Training</div>
<div class="t" style="left:287.80px;top:260.13px;font-size:10.6px;color:#111;font-weight:normal;transform:scaleX(0.9460);transform-origin:0 0;">Player 10</div>
<div class="t" style="left:365.70px;top:260.13px;font-size:10.6px;color:#111;font-weight:normal;transform:scaleX(1.0120);transform-origin:0 0;">Senior</div>
<div class="t" style="left:413.60px;top:260.13px;font-size:10.6px;color:#111;font-weight:normal;transform:scaleX(1.0000);transform-origin:0 0;">Rest</div>
<div class="t" style="left:176.50px;width:400px;text-align:right;top:260.13px;font-size:10.6px;color:#111;font-weight:normal;transform:scaleX(0.9050);transform-origin:100% 0;">2</div>
<div class="t" style="left:263.40px;width:400px;text-align:right;top:260.13px;font-size:10.6px;color:#111;font-weight:normal;transform:scaleX(0.9050);transform-origin:100% 0;">7</div>
<div class="t" style="left:325.30px;width:400px;text-align:right;top:260.13px;font-size:10.6px;color:#111;font-weight:normal;transform:scaleX(0.9070);transform-origin:100% 0;">12:00:52 AM</div>
<div class="t" style="left:-190.00px;width:400px;text-align:center;top:260.13px;font-size:10.6px;color:#444;font-weight:normal;transform:scaleX(0.9050);transform-origin:50% 0;">3</div>
<div class="t" style="left:23.10px;top:275.28px;font-size:10.6px;color:#111;font-weight:normal;transform:scaleX(0.8990);transform-origin:0 0;">20182019</div>
<div class="t" style="left:73.80px;top:275.28px;font-size:10.6px;color:#111;font-weight:normal;transform:scaleX(0.9120);transform-origin:0 0;">PS11 Game_2</div>
<div class="t" style="left:143.80px;top:275.28px;font-size:10.6px;color:#111;font-weight:normal;transform:scaleX(0.9240);transform-origin:0 0;">24-08-18</div>
<div class="t" style="left:188.10px;top:275.28px;font-size:10.6px;color:#111;font-weight:normal;transform:scaleX(1.0450);transform-origin:0 0;">Training</div>
<div class="t" style="left:287.80px;top:275.28px;font-size:10.6px;color:#111;font-weight:normal;transform:scaleX(0.9460);transform-origin:0 0;">Player 1</div>
<div class="t" style="left:365.70px;top:275.28px;font-size:10.6px;color:#111;font-weight:normal;transform:scaleX(1.0120);transform-origin:0 0;">Senior</div>
<div class="t" style="left:413.60px;top:275.28px;font-size:10.6px;color:#111;font-weight:normal;transform:scaleX(0.9940);transform-origin:0 0;">Warm Up</div>
<div class="t" style="left:176.50px;width:400px;text-align:right;top:275.28px;font-size:10.6px;color:#111;font-weight:normal;transform:scaleX(0.9050);transform-origin:100% 0;">1</div>
<div class="t" style="left:263.40px;width:400px;text-align:right;top:275.28px;font-size:10.6px;color:#111;font-weight:normal;transform:scaleX(0.9050);transform-origin:100% 0;">1</div>
<div class="t" style="left:325.30px;width:400px;text-align:right;top:275.28px;font-size:10.6px;color:#111;font-weight:normal;transform:scaleX(0.9070);transform-origin:100% 0;">12:10:43 AM</div>
<div class="t" style="left:-190.00px;width:400px;text-align:center;top:275.28px;font-size:10.6px;color:#444;font-weight:normal;transform:scaleX(0.9050);transform-origin:50% 0;">4</div>
<div class="t" style="left:23.10px;top:290.43px;font-size:10.6px;color:#111;font-weight:normal;transform:scaleX(0.8990);transform-origin:0 0;">20182019</div>
<div class="t" style="left:73.80px;top:290.43px;font-size:10.6px;color:#111;font-weight:normal;transform:scaleX(0.9120);transform-origin:0 0;">PS11 Game_2</div>
<div class="t" style="left:143.80px;top:290.43px;font-size:10.6px;color:#111;font-weight:normal;transform:scaleX(0.9240);transform-origin:0 0;">24-08-18</div>
<div class="t" style="left:188.10px;top:290.43px;font-size:10.6px;color:#111;font-weight:normal;transform:scaleX(1.0450);transform-origin:0 0;">Training</div>
<div class="t" style="left:287.80px;top:290.43px;font-size:10.6px;color:#111;font-weight:normal;transform:scaleX(0.9460);transform-origin:0 0;">Player 2</div>
<div class="t" style="left:365.70px;top:290.43px;font-size:10.6px;color:#111;font-weight:normal;transform:scaleX(1.0120);transform-origin:0 0;">Senior</div>
<div class="t" style="left:413.60px;top:290.43px;font-size:10.6px;color:#111;font-weight:normal;transform:scaleX(0.9940);transform-origin:0 0;">Warm Up</div>
<div class="t" style="left:176.50px;width:400px;text-align:right;top:290.43px;font-size:10.6px;color:#111;font-weight:normal;transform:scaleX(0.9050);transform-origin:100% 0;">1</div>
<div class="t" style="left:263.40px;width:400px;text-align:right;top:290.43px;font-size:10.6px;color:#111;font-weight:normal;transform:scaleX(0.9050);transform-origin:100% 0;">2</div>
<div class="t" style="left:325.30px;width:400px;text-align:right;top:290.43px;font-size:10.6px;color:#111;font-weight:normal;transform:scaleX(0.9070);transform-origin:100% 0;">12:10:43 AM</div>
<div class="t" style="left:-190.00px;width:400px;text-align:center;top:290.43px;font-size:10.6px;color:#444;font-weight:normal;transform:scaleX(0.9050);transform-origin:50% 0;">5</div>
<div class="t" style="left:23.10px;top:305.58px;font-size:10.6px;color:#111;font-weight:normal;transform:scaleX(0.8990);transform-origin:0 0;">20182019</div>
<div class="t" style="left:73.80px;top:305.58px;font-size:10.6px;color:#111;font-weight:normal;transform:scaleX(0.9120);transform-origin:0 0;">PS11 Game_2</div>
<div class="t" style="left:143.80px;top:305.58px;font-size:10.6px;color:#111;font-weight:normal;transform:scaleX(0.9240);transform-origin:0 0;">24-08-18</div>
<div class="t" style="left:188.10px;top:305.58px;font-size:10.6px;color:#111;font-weight:normal;transform:scaleX(1.0450);transform-origin:0 0;">Training</div>
<div class="t" style="left:287.80px;top:305.58px;font-size:10.6px;color:#111;font-weight:normal;transform:scaleX(0.9460);transform-origin:0 0;">Player 2</div>
<div class="t" style="left:365.70px;top:305.58px;font-size:10.6px;color:#111;font-weight:normal;transform:scaleX(1.0120);transform-origin:0 0;">Senior</div>
<div class="t" style="left:413.60px;top:305.58px;font-size:10.6px;color:#111;font-weight:normal;transform:scaleX(1.0000);transform-origin:0 0;">Rest</div>
<div class="t" style="left:176.50px;width:400px;text-align:right;top:305.58px;font-size:10.6px;color:#111;font-weight:normal;transform:scaleX(0.9050);transform-origin:100% 0;">2</div>
<div class="t" style="left:263.40px;width:400px;text-align:right;top:305.58px;font-size:10.6px;color:#111;font-weight:normal;transform:scaleX(0.9050);transform-origin:100% 0;">2</div>
<div class="t" style="left:325.30px;width:400px;text-align:right;top:305.58px;font-size:10.6px;color:#111;font-weight:normal;transform:scaleX(0.9070);transform-origin:100% 0;">12:00:52 AM</div>
<div class="t" style="left:-190.00px;width:400px;text-align:center;top:305.58px;font-size:10.6px;color:#444;font-weight:normal;transform:scaleX(0.9050);transform-origin:50% 0;">6</div>
<div class="t" style="left:23.10px;top:320.73px;font-size:10.6px;color:#111;font-weight:normal;transform:scaleX(0.8990);transform-origin:0 0;">20182019</div>
<div class="t" style="left:73.80px;top:320.73px;font-size:10.6px;color:#111;font-weight:normal;transform:scaleX(0.9120);transform-origin:0 0;">PS11 Game_2</div>
<div class="t" style="left:143.80px;top:320.73px;font-size:10.6px;color:#111;font-weight:normal;transform:scaleX(0.9240);transform-origin:0 0;">24-08-18</div>
<div class="t" style="left:188.10px;top:320.73px;font-size:10.6px;color:#111;font-weight:normal;transform:scaleX(1.0450);transform-origin:0 0;">Training</div>
<div class="t" style="left:287.80px;top:320.73px;font-size:10.6px;color:#111;font-weight:normal;transform:scaleX(0.9460);transform-origin:0 0;">Player 5</div>
<div class="t" style="left:365.70px;top:320.73px;font-size:10.6px;color:#111;font-weight:normal;transform:scaleX(0.9480);transform-origin:0 0;">Academy</div>
<div class="t" style="left:413.60px;top:320.73px;font-size:10.6px;color:#111;font-weight:normal;transform:scaleX(0.9940);transform-origin:0 0;">Warm Up</div>
<div class="t" style="left:176.50px;width:400px;text-align:right;top:320.73px;font-size:10.6px;color:#111;font-weight:normal;transform:scaleX(0.9050);transform-origin:100% 0;">1</div>
<div class="t" style="left:263.40px;width:400px;text-align:right;top:320.73px;font-size:10.6px;color:#111;font-weight:normal;transform:scaleX(0.9050);transform-origin:100% 0;">2</div>
<div class="t" style="left:325.30px;width:400px;text-align:right;top:320.73px;font-size:10.6px;color:#111;font-weight:normal;transform:scaleX(0.9070);transform-origin:100% 0;">12:10:43 AM</div>
<div class="t" style="left:-190.00px;width:400px;text-align:center;top:320.73px;font-size:10.6px;color:#444;font-weight:normal;transform:scaleX(0.9050);transform-origin:50% 0;">7</div>
<div class="t" style="left:23.10px;top:335.88px;font-size:10.6px;color:#111;font-weight:normal;transform:scaleX(0.8990);transform-origin:0 0;">20182019</div>
<div class="t" style="left:73.80px;top:335.88px;font-size:10.6px;color:#111;font-weight:normal;transform:scaleX(0.9120);transform-origin:0 0;">PS11 Game_2</div>
<div class="t" style="left:143.80px;top:335.88px;font-size:10.6px;color:#111;font-weight:normal;transform:scaleX(0.9240);transform-origin:0 0;">24-08-18</div>
<div class="t" style="left:188.10px;top:335.88px;font-size:10.6px;color:#111;font-weight:normal;transform:scaleX(1.0450);transform-origin:0 0;">Training</div>
<div class="t" style="left:287.80px;top:335.88px;font-size:10.6px;color:#111;font-weight:normal;transform:scaleX(0.9460);transform-origin:0 0;">Player 5</div>
<div class="t" style="left:365.70px;top:335.88px;font-size:10.6px;color:#111;font-weight:normal;transform:scaleX(0.9480);transform-origin:0 0;">Academy</div>
<div class="t" style="left:413.60px;top:335.88px;font-size:10.6px;color:#111;font-weight:normal;transform:scaleX(1.0000);transform-origin:0 0;">Rest</div>
<div class="t" style="left:176.50px;width:400px;text-align:right;top:335.88px;font-size:10.6px;color:#111;font-weight:normal;transform:scaleX(0.9050);transform-origin:100% 0;">2</div>
<div class="t" style="left:263.40px;width:400px;text-align:right;top:335.88px;font-size:10.6px;color:#111;font-weight:normal;transform:scaleX(0.9050);transform-origin:100% 0;">2</div>
<div class="t" style="left:325.30px;width:400px;text-align:right;top:335.88px;font-size:10.6px;color:#111;font-weight:normal;transform:scaleX(0.9070);transform-origin:100% 0;">12:00:52 AM</div>
<div class="t" style="left:-190.00px;width:400px;text-align:center;top:335.88px;font-size:10.6px;color:#444;font-weight:normal;transform:scaleX(0.9050);transform-origin:50% 0;">8</div>
<div class="t" style="left:23.10px;top:351.03px;font-size:10.6px;color:#111;font-weight:normal;transform:scaleX(0.8990);transform-origin:0 0;">20182019</div>
<div class="t" style="left:73.80px;top:351.03px;font-size:10.6px;color:#111;font-weight:normal;transform:scaleX(0.9120);transform-origin:0 0;">PS11 Game_2</div>
<div class="t" style="left:143.80px;top:351.03px;font-size:10.6px;color:#111;font-weight:normal;transform:scaleX(0.9240);transform-origin:0 0;">24-08-18</div>
<div class="t" style="left:188.10px;top:351.03px;font-size:10.6px;color:#111;font-weight:normal;transform:scaleX(1.0450);transform-origin:0 0;">Training</div>
<div class="t" style="left:287.80px;top:351.03px;font-size:10.6px;color:#111;font-weight:normal;transform:scaleX(0.9460);transform-origin:0 0;">Player 3</div>
<div class="t" style="left:365.70px;top:351.03px;font-size:10.6px;color:#111;font-weight:normal;transform:scaleX(0.9360);transform-origin:0 0;">U23</div>
<div class="t" style="left:413.60px;top:351.03px;font-size:10.6px;color:#111;font-weight:normal;transform:scaleX(0.9940);transform-origin:0 0;">Warm Up</div>
<div class="t" style="left:176.50px;width:400px;text-align:right;top:351.03px;font-size:10.6px;color:#111;font-weight:normal;transform:scaleX(0.9050);transform-origin:100% 0;">1</div>
<div class="t" style="left:263.40px;width:400px;text-align:right;top:351.03px;font-size:10.6px;color:#111;font-weight:normal;transform:scaleX(0.9050);transform-origin:100% 0;">7</div>
<div class="t" style="left:325.30px;width:400px;text-align:right;top:351.03px;font-size:10.6px;color:#111;font-weight:normal;transform:scaleX(0.9070);transform-origin:100% 0;">12:10:43 AM</div>
<div class="t" style="left:-190.00px;width:400px;text-align:center;top:351.03px;font-size:10.6px;color:#444;font-weight:normal;transform:scaleX(0.9050);transform-origin:50% 0;">9</div>
<div class="t" style="left:23.10px;top:366.18px;font-size:10.6px;color:#111;font-weight:normal;transform:scaleX(0.8990);transform-origin:0 0;">20182019</div>
<div class="t" style="left:73.80px;top:366.18px;font-size:10.6px;color:#111;font-weight:normal;transform:scaleX(0.9120);transform-origin:0 0;">PS11 Game_2</div>
<div class="t" style="left:143.80px;top:366.18px;font-size:10.6px;color:#111;font-weight:normal;transform:scaleX(0.9240);transform-origin:0 0;">24-08-18</div>
<div class="t" style="left:188.10px;top:366.18px;font-size:10.6px;color:#111;font-weight:normal;transform:scaleX(1.0450);transform-origin:0 0;">Training</div>
<div class="t" style="left:287.80px;top:366.18px;font-size:10.6px;color:#111;font-weight:normal;transform:scaleX(0.9460);transform-origin:0 0;">Player 7</div>
<div class="t" style="left:365.70px;top:366.18px;font-size:10.6px;color:#111;font-weight:normal;transform:scaleX(1.0120);transform-origin:0 0;">Senior</div>
<div class="t" style="left:413.60px;top:366.18px;font-size:10.6px;color:#111;font-weight:normal;transform:scaleX(0.9940);transform-origin:0 0;">Warm Up</div>
<div class="t" style="left:176.50px;width:400px;text-align:right;top:366.18px;font-size:10.6px;color:#111;font-weight:normal;transform:scaleX(0.9050);transform-origin:100% 0;">1</div>
<div class="t" style="left:263.40px;width:400px;text-align:right;top:366.18px;font-size:10.6px;color:#111;font-weight:normal;transform:scaleX(0.9050);transform-origin:100% 0;">5</div>
<div class="t" style="left:325.30px;width:400px;text-align:right;top:366.18px;font-size:10.6px;color:#111;font-weight:normal;transform:scaleX(0.9070);transform-origin:100% 0;">12:10:43 AM</div>
<div class="t" style="left:-190.00px;width:400px;text-align:center;top:366.18px;font-size:10.6px;color:#444;font-weight:normal;transform:scaleX(0.9050);transform-origin:50% 0;">10</div>
<div class="t" style="left:23.10px;top:381.33px;font-size:10.6px;color:#111;font-weight:normal;transform:scaleX(0.8990);transform-origin:0 0;">20182019</div>
<div class="t" style="left:73.80px;top:381.33px;font-size:10.6px;color:#111;font-weight:normal;transform:scaleX(0.9120);transform-origin:0 0;">PS11 Game_2</div>
<div class="t" style="left:143.80px;top:381.33px;font-size:10.6px;color:#111;font-weight:normal;transform:scaleX(0.9240);transform-origin:0 0;">24-08-18</div>
<div class="t" style="left:188.10px;top:381.33px;font-size:10.6px;color:#111;font-weight:normal;transform:scaleX(1.0450);transform-origin:0 0;">Training</div>
<div class="t" style="left:287.80px;top:381.33px;font-size:10.6px;color:#111;font-weight:normal;transform:scaleX(0.9460);transform-origin:0 0;">Player 4</div>
<div class="t" style="left:365.70px;top:381.33px;font-size:10.6px;color:#111;font-weight:normal;transform:scaleX(0.9360);transform-origin:0 0;">U23</div>
<div class="t" style="left:413.60px;top:381.33px;font-size:10.6px;color:#111;font-weight:normal;transform:scaleX(0.9940);transform-origin:0 0;">Warm Up</div>
<div class="t" style="left:176.50px;width:400px;text-align:right;top:381.33px;font-size:10.6px;color:#111;font-weight:normal;transform:scaleX(0.9050);transform-origin:100% 0;">1</div>
<div class="t" style="left:263.40px;width:400px;text-align:right;top:381.33px;font-size:10.6px;color:#111;font-weight:normal;transform:scaleX(0.9050);transform-origin:100% 0;">7</div>
<div class="t" style="left:325.30px;width:400px;text-align:right;top:381.33px;font-size:10.6px;color:#111;font-weight:normal;transform:scaleX(0.9070);transform-origin:100% 0;">12:10:43 AM</div>
<div class="t" style="left:-190.00px;width:400px;text-align:center;top:381.33px;font-size:10.6px;color:#444;font-weight:normal;transform:scaleX(0.9050);transform-origin:50% 0;">11</div>
<div class="t" style="left:23.10px;top:396.48px;font-size:10.6px;color:#111;font-weight:normal;transform:scaleX(0.8990);transform-origin:0 0;">20182019</div>
<div class="t" style="left:73.80px;top:396.48px;font-size:10.6px;color:#111;font-weight:normal;transform:scaleX(0.9120);transform-origin:0 0;">PS11 Game_2</div>
<div class="t" style="left:143.80px;top:396.48px;font-size:10.6px;color:#111;font-weight:normal;transform:scaleX(0.9240);transform-origin:0 0;">24-08-18</div>
<div class="t" style="left:188.10px;top:396.48px;font-size:10.6px;color:#111;font-weight:normal;transform:scaleX(1.0450);transform-origin:0 0;">Training</div>
<div class="t" style="left:287.80px;top:396.48px;font-size:10.6px;color:#111;font-weight:normal;transform:scaleX(0.9460);transform-origin:0 0;">Player 6</div>
<div class="t" style="left:365.70px;top:396.48px;font-size:10.6px;color:#111;font-weight:normal;transform:scaleX(0.9480);transform-origin:0 0;">Academy</div>
<div class="t" style="left:413.60px;top:396.48px;font-size:10.6px;color:#111;font-weight:normal;transform:scaleX(0.9940);transform-origin:0 0;">Warm Up</div>
<div class="t" style="left:176.50px;width:400px;text-align:right;top:396.48px;font-size:10.6px;color:#111;font-weight:normal;transform:scaleX(0.9050);transform-origin:100% 0;">1</div>
<div class="t" style="left:263.40px;width:400px;text-align:right;top:396.48px;font-size:10.6px;color:#111;font-weight:normal;transform:scaleX(0.9050);transform-origin:100% 0;">4</div>
<div class="t" style="left:325.30px;width:400px;text-align:right;top:396.48px;font-size:10.6px;color:#111;font-weight:normal;transform:scaleX(0.9070);transform-origin:100% 0;">12:10:43 AM</div>
<div class="t" style="left:-190.00px;width:400px;text-align:center;top:396.48px;font-size:10.6px;color:#217346;font-weight:normal;transform:scaleX(0.9050);transform-origin:50% 0;">12</div>
<div class="t" style="left:23.10px;top:411.63px;font-size:10.6px;color:#111;font-weight:normal;transform:scaleX(0.8990);transform-origin:0 0;">20182019</div>
<div class="t" style="left:73.80px;top:411.63px;font-size:10.6px;color:#111;font-weight:normal;transform:scaleX(0.9120);transform-origin:0 0;">PS11 Game_2</div>
<div class="t" style="left:143.80px;top:411.63px;font-size:10.6px;color:#111;font-weight:normal;transform:scaleX(0.9240);transform-origin:0 0;">24-08-18</div>
<div class="t" style="left:188.10px;top:411.63px;font-size:10.6px;color:#111;font-weight:normal;transform:scaleX(1.0450);transform-origin:0 0;">Training</div>
<div class="t" style="left:287.80px;top:411.63px;font-size:10.6px;color:#111;font-weight:normal;transform:scaleX(0.9460);transform-origin:0 0;">Player 11</div>
<div class="t" style="left:365.70px;top:411.63px;font-size:10.6px;color:#111;font-weight:normal;transform:scaleX(0.9480);transform-origin:0 0;">Academy</div>
<div class="t" style="left:413.60px;top:411.63px;font-size:10.6px;color:#111;font-weight:normal;transform:scaleX(0.9940);transform-origin:0 0;">Warm Up</div>
<div class="t" style="left:176.50px;width:400px;text-align:right;top:411.63px;font-size:10.6px;color:#111;font-weight:normal;transform:scaleX(0.9050);transform-origin:100% 0;">1</div>
<div class="t" style="left:263.40px;width:400px;text-align:right;top:411.63px;font-size:10.6px;color:#111;font-weight:normal;transform:scaleX(0.9050);transform-origin:100% 0;">8</div>
<div class="t" style="left:325.30px;width:400px;text-align:right;top:411.63px;font-size:10.6px;color:#111;font-weight:normal;transform:scaleX(0.9070);transform-origin:100% 0;">12:10:43 AM</div>
<div class="t" style="left:-190.00px;width:400px;text-align:center;top:411.63px;font-size:10.6px;color:#444;font-weight:normal;transform:scaleX(0.9050);transform-origin:50% 0;">13</div>
<div class="t" style="left:23.10px;top:426.78px;font-size:10.6px;color:#111;font-weight:normal;transform:scaleX(0.8990);transform-origin:0 0;">20182019</div>
<div class="t" style="left:73.80px;top:426.78px;font-size:10.6px;color:#111;font-weight:normal;transform:scaleX(0.9120);transform-origin:0 0;">PS11 Game_2</div>
<div class="t" style="left:143.80px;top:426.78px;font-size:10.6px;color:#111;font-weight:normal;transform:scaleX(0.9240);transform-origin:0 0;">24-08-18</div>
<div class="t" style="left:188.10px;top:426.78px;font-size:10.6px;color:#111;font-weight:normal;transform:scaleX(1.0450);transform-origin:0 0;">Training</div>
<div class="t" style="left:287.80px;top:426.78px;font-size:10.6px;color:#111;font-weight:normal;transform:scaleX(0.9460);transform-origin:0 0;">Player 8</div>
<div class="t" style="left:365.70px;top:426.78px;font-size:10.6px;color:#111;font-weight:normal;transform:scaleX(0.9360);transform-origin:0 0;">U18</div>
<div class="t" style="left:413.60px;top:426.78px;font-size:10.6px;color:#111;font-weight:normal;transform:scaleX(0.9940);transform-origin:0 0;">Warm Up</div>
<div class="t" style="left:176.50px;width:400px;text-align:right;top:426.78px;font-size:10.6px;color:#111;font-weight:normal;transform:scaleX(0.9050);transform-origin:100% 0;">1</div>
<div class="t" style="left:263.40px;width:400px;text-align:right;top:426.78px;font-size:10.6px;color:#111;font-weight:normal;transform:scaleX(0.9050);transform-origin:100% 0;">1</div>
<div class="t" style="left:325.30px;width:400px;text-align:right;top:426.78px;font-size:10.6px;color:#111;font-weight:normal;transform:scaleX(0.9070);transform-origin:100% 0;">12:10:43 AM</div>
<div class="t" style="left:-190.00px;width:400px;text-align:center;top:426.78px;font-size:10.6px;color:#444;font-weight:normal;transform:scaleX(0.9050);transform-origin:50% 0;">14</div>
<div class="t" style="left:23.10px;top:441.93px;font-size:10.6px;color:#111;font-weight:normal;transform:scaleX(0.8990);transform-origin:0 0;">20182019</div>
<div class="t" style="left:73.80px;top:441.93px;font-size:10.6px;color:#111;font-weight:normal;transform:scaleX(0.9120);transform-origin:0 0;">PS11 Game_2</div>
<div class="t" style="left:143.80px;top:441.93px;font-size:10.6px;color:#111;font-weight:normal;transform:scaleX(0.9240);transform-origin:0 0;">24-08-18</div>
<div class="t" style="left:188.10px;top:441.93px;font-size:10.6px;color:#111;font-weight:normal;transform:scaleX(1.0450);transform-origin:0 0;">Training</div>
<div class="t" style="left:287.80px;top:441.93px;font-size:10.6px;color:#111;font-weight:normal;transform:scaleX(0.9460);transform-origin:0 0;">Player 13</div>
<div class="t" style="left:365.70px;top:441.93px;font-size:10.6px;color:#111;font-weight:normal;transform:scaleX(1.0120);transform-origin:0 0;">Senior</div>
<div class="t" style="left:413.60px;top:441.93px;font-size:10.6px;color:#111;font-weight:normal;transform:scaleX(0.9940);transform-origin:0 0;">Warm Up</div>
<div class="t" style="left:176.50px;width:400px;text-align:right;top:441.93px;font-size:10.6px;color:#111;font-weight:normal;transform:scaleX(0.9050);transform-origin:100% 0;">1</div>
<div class="t" style="left:263.40px;width:400px;text-align:right;top:441.93px;font-size:10.6px;color:#111;font-weight:normal;transform:scaleX(0.9050);transform-origin:100% 0;">6</div>
<div class="t" style="left:325.30px;width:400px;text-align:right;top:441.93px;font-size:10.6px;color:#111;font-weight:normal;transform:scaleX(0.9070);transform-origin:100% 0;">12:10:43 AM</div>
<div class="t" style="left:-190.00px;width:400px;text-align:center;top:441.93px;font-size:10.6px;color:#444;font-weight:normal;transform:scaleX(0.9050);transform-origin:50% 0;">15</div>
<div class="t" style="left:23.10px;top:457.08px;font-size:10.6px;color:#111;font-weight:normal;transform:scaleX(0.8990);transform-origin:0 0;">20182019</div>
<div class="t" style="left:73.80px;top:457.08px;font-size:10.6px;color:#111;font-weight:normal;transform:scaleX(0.9120);transform-origin:0 0;">PS11 Game_2</div>
<div class="t" style="left:143.80px;top:457.08px;font-size:10.6px;color:#111;font-weight:normal;transform:scaleX(0.9240);transform-origin:0 0;">24-08-18</div>
<div class="t" style="left:188.10px;top:457.08px;font-size:10.6px;color:#111;font-weight:normal;transform:scaleX(1.0450);transform-origin:0 0;">Training</div>
<div class="t" style="left:287.80px;top:457.08px;font-size:10.6px;color:#111;font-weight:normal;transform:scaleX(0.9460);transform-origin:0 0;">Player 9</div>
<div class="t" style="left:365.70px;top:457.08px;font-size:10.6px;color:#111;font-weight:normal;transform:scaleX(0.9360);transform-origin:0 0;">U18</div>
<div class="t" style="left:413.60px;top:457.08px;font-size:10.6px;color:#111;font-weight:normal;transform:scaleX(0.9940);transform-origin:0 0;">Warm Up</div>
<div class="t" style="left:176.50px;width:400px;text-align:right;top:457.08px;font-size:10.6px;color:#111;font-weight:normal;transform:scaleX(0.9050);transform-origin:100% 0;">1</div>
<div class="t" style="left:263.40px;width:400px;text-align:right;top:457.08px;font-size:10.6px;color:#111;font-weight:normal;transform:scaleX(0.9050);transform-origin:100% 0;">8</div>
<div class="t" style="left:325.30px;width:400px;text-align:right;top:457.08px;font-size:10.6px;color:#111;font-weight:normal;transform:scaleX(0.9070);transform-origin:100% 0;">12:10:43 AM</div>
<div class="t" style="left:-190.00px;width:400px;text-align:center;top:457.08px;font-size:10.6px;color:#444;font-weight:normal;transform:scaleX(0.9050);transform-origin:50% 0;">16</div>
<div class="t" style="left:23.10px;top:472.23px;font-size:10.6px;color:#111;font-weight:normal;transform:scaleX(0.8990);transform-origin:0 0;">20182019</div>
<div class="t" style="left:73.80px;top:472.23px;font-size:10.6px;color:#111;font-weight:normal;transform:scaleX(0.9120);transform-origin:0 0;">PS11 Game_2</div>
<div class="t" style="left:143.80px;top:472.23px;font-size:10.6px;color:#111;font-weight:normal;transform:scaleX(0.9240);transform-origin:0 0;">24-08-18</div>
<div class="t" style="left:188.10px;top:472.23px;font-size:10.6px;color:#111;font-weight:normal;transform:scaleX(1.0450);transform-origin:0 0;">Training</div>
<div class="t" style="left:287.80px;top:472.23px;font-size:10.6px;color:#111;font-weight:normal;transform:scaleX(0.9460);transform-origin:0 0;">Player 7</div>
<div class="t" style="left:365.70px;top:472.23px;font-size:10.6px;color:#111;font-weight:normal;transform:scaleX(1.0120);transform-origin:0 0;">Senior</div>
<div class="t" style="left:413.60px;top:472.23px;font-size:10.6px;color:#111;font-weight:normal;transform:scaleX(1.0000);transform-origin:0 0;">Rest</div>
<div class="t" style="left:176.50px;width:400px;text-align:right;top:472.23px;font-size:10.6px;color:#111;font-weight:normal;transform:scaleX(0.9050);transform-origin:100% 0;">2</div>
<div class="t" style="left:263.40px;width:400px;text-align:right;top:472.23px;font-size:10.6px;color:#111;font-weight:normal;transform:scaleX(0.9050);transform-origin:100% 0;">5</div>
<div class="t" style="left:325.30px;width:400px;text-align:right;top:472.23px;font-size:10.6px;color:#111;font-weight:normal;transform:scaleX(0.9070);transform-origin:100% 0;">12:00:52 AM</div>
<div class="t" style="left:-190.00px;width:400px;text-align:center;top:472.23px;font-size:10.6px;color:#444;font-weight:normal;transform:scaleX(0.9050);transform-origin:50% 0;">17</div>
<div class="t" style="left:23.10px;top:487.38px;font-size:10.6px;color:#111;font-weight:normal;transform:scaleX(0.8990);transform-origin:0 0;">20182019</div>
<div class="t" style="left:73.80px;top:487.38px;font-size:10.6px;color:#111;font-weight:normal;transform:scaleX(0.9120);transform-origin:0 0;">PS11 Game_2</div>
<div class="t" style="left:143.80px;top:487.38px;font-size:10.6px;color:#111;font-weight:normal;transform:scaleX(0.9240);transform-origin:0 0;">24-08-18</div>
<div class="t" style="left:188.10px;top:487.38px;font-size:10.6px;color:#111;font-weight:normal;transform:scaleX(1.0450);transform-origin:0 0;">Training</div>
<div class="t" style="left:287.80px;top:487.38px;font-size:10.6px;color:#111;font-weight:normal;transform:scaleX(0.9460);transform-origin:0 0;">Player 4</div>
<div class="t" style="left:365.70px;top:487.38px;font-size:10.6px;color:#111;font-weight:normal;transform:scaleX(0.9360);transform-origin:0 0;">U23</div>
<div class="t" style="left:413.60px;top:487.38px;font-size:10.6px;color:#111;font-weight:normal;transform:scaleX(1.0000);transform-origin:0 0;">Rest</div>
<div class="t" style="left:176.50px;width:400px;text-align:right;top:487.38px;font-size:10.6px;color:#111;font-weight:normal;transform:scaleX(0.9050);transform-origin:100% 0;">2</div>
<div class="t" style="left:263.40px;width:400px;text-align:right;top:487.38px;font-size:10.6px;color:#111;font-weight:normal;transform:scaleX(0.9050);transform-origin:100% 0;">7</div>
<div class="t" style="left:325.30px;width:400px;text-align:right;top:487.38px;font-size:10.6px;color:#111;font-weight:normal;transform:scaleX(0.9070);transform-origin:100% 0;">12:00:52 AM</div>
<div class="t" style="left:-190.00px;width:400px;text-align:center;top:487.38px;font-size:10.6px;color:#444;font-weight:normal;transform:scaleX(0.9050);transform-origin:50% 0;">18</div>
<div class="t" style="left:23.10px;top:502.53px;font-size:10.6px;color:#111;font-weight:normal;transform:scaleX(0.8990);transform-origin:0 0;">20182019</div>
<div class="t" style="left:73.80px;top:502.53px;font-size:10.6px;color:#111;font-weight:normal;transform:scaleX(0.9120);transform-origin:0 0;">PS11 Game_2</div>
<div class="t" style="left:143.80px;top:502.53px;font-size:10.6px;color:#111;font-weight:normal;transform:scaleX(0.9240);transform-origin:0 0;">24-08-18</div>
<div class="t" style="left:188.10px;top:502.53px;font-size:10.6px;color:#111;font-weight:normal;transform:scaleX(1.0450);transform-origin:0 0;">Training</div>
<div class="t" style="left:287.80px;top:502.53px;font-size:10.6px;color:#111;font-weight:normal;transform:scaleX(0.9460);transform-origin:0 0;">Player 6</div>
<div class="t" style="left:365.70px;top:502.53px;font-size:10.6px;color:#111;font-weight:normal;transform:scaleX(0.9480);transform-origin:0 0;">Academy</div>
<div class="t" style="left:413.60px;top:502.53px;font-size:10.6px;color:#111;font-weight:normal;transform:scaleX(1.0000);transform-origin:0 0;">Rest</div>
<div class="t" style="left:176.50px;width:400px;text-align:right;top:502.53px;font-size:10.6px;color:#111;font-weight:normal;transform:scaleX(0.9050);transform-origin:100% 0;">2</div>
<div class="t" style="left:263.40px;width:400px;text-align:right;top:502.53px;font-size:10.6px;color:#111;font-weight:normal;transform:scaleX(0.9050);transform-origin:100% 0;">4</div>
<div class="t" style="left:325.30px;width:400px;text-align:right;top:502.53px;font-size:10.6px;color:#111;font-weight:normal;transform:scaleX(0.9070);transform-origin:100% 0;">12:00:52 AM</div>
<div class="t" style="left:-190.00px;width:400px;text-align:center;top:502.53px;font-size:10.6px;color:#444;font-weight:normal;transform:scaleX(0.9050);transform-origin:50% 0;">19</div>
<div class="t" style="left:23.10px;top:517.68px;font-size:10.6px;color:#111;font-weight:normal;transform:scaleX(0.8990);transform-origin:0 0;">20182019</div>
<div class="t" style="left:73.80px;top:517.68px;font-size:10.6px;color:#111;font-weight:normal;transform:scaleX(0.9120);transform-origin:0 0;">PS11 Game_2</div>
<div class="t" style="left:143.80px;top:517.68px;font-size:10.6px;color:#111;font-weight:normal;transform:scaleX(0.9240);transform-origin:0 0;">24-08-18</div>
<div class="t" style="left:188.10px;top:517.68px;font-size:10.6px;color:#111;font-weight:normal;transform:scaleX(1.0450);transform-origin:0 0;">Training</div>
<div class="t" style="left:287.80px;top:517.68px;font-size:10.6px;color:#111;font-weight:normal;transform:scaleX(0.9460);transform-origin:0 0;">Player 1</div>
<div class="t" style="left:365.70px;top:517.68px;font-size:10.6px;color:#111;font-weight:normal;transform:scaleX(1.0120);transform-origin:0 0;">Senior</div>
<div class="t" style="left:413.60px;top:517.68px;font-size:10.6px;color:#111;font-weight:normal;transform:scaleX(1.0000);transform-origin:0 0;">Rest</div>
<div class="t" style="left:176.50px;width:400px;text-align:right;top:517.68px;font-size:10.6px;color:#111;font-weight:normal;transform:scaleX(0.9050);transform-origin:100% 0;">2</div>
<div class="t" style="left:263.40px;width:400px;text-align:right;top:517.68px;font-size:10.6px;color:#111;font-weight:normal;transform:scaleX(0.9050);transform-origin:100% 0;">1</div>
<div class="t" style="left:325.30px;width:400px;text-align:right;top:517.68px;font-size:10.6px;color:#111;font-weight:normal;transform:scaleX(0.9070);transform-origin:100% 0;">12:00:52 AM</div>
<div class="t" style="left:-190.00px;width:400px;text-align:center;top:517.68px;font-size:10.6px;color:#444;font-weight:normal;transform:scaleX(0.9050);transform-origin:50% 0;">20</div>
<div class="t" style="left:23.10px;top:532.83px;font-size:10.6px;color:#111;font-weight:normal;transform:scaleX(0.8990);transform-origin:0 0;">20182019</div>
<div class="t" style="left:73.80px;top:532.83px;font-size:10.6px;color:#111;font-weight:normal;transform:scaleX(0.9120);transform-origin:0 0;">PS11 Game_2</div>
<div class="t" style="left:143.80px;top:532.83px;font-size:10.6px;color:#111;font-weight:normal;transform:scaleX(0.9240);transform-origin:0 0;">24-08-18</div>
<div class="t" style="left:188.10px;top:532.83px;font-size:10.6px;color:#111;font-weight:normal;transform:scaleX(1.0450);transform-origin:0 0;">Training</div>
<div class="t" style="left:287.80px;top:532.83px;font-size:10.6px;color:#111;font-weight:normal;transform:scaleX(0.9460);transform-origin:0 0;">Player 11</div>
<div class="t" style="left:365.70px;top:532.83px;font-size:10.6px;color:#111;font-weight:normal;transform:scaleX(0.9480);transform-origin:0 0;">Academy</div>
<div class="t" style="left:413.60px;top:532.83px;font-size:10.6px;color:#111;font-weight:normal;transform:scaleX(1.0000);transform-origin:0 0;">Rest</div>
<div class="t" style="left:176.50px;width:400px;text-align:right;top:532.83px;font-size:10.6px;color:#111;font-weight:normal;transform:scaleX(0.9050);transform-origin:100% 0;">2</div>
<div class="t" style="left:263.40px;width:400px;text-align:right;top:532.83px;font-size:10.6px;color:#111;font-weight:normal;transform:scaleX(0.9050);transform-origin:100% 0;">8</div>
<div class="t" style="left:325.30px;width:400px;text-align:right;top:532.83px;font-size:10.6px;color:#111;font-weight:normal;transform:scaleX(0.9070);transform-origin:100% 0;">12:00:52 AM</div>
<div class="t" style="left:-190.00px;width:400px;text-align:center;top:532.83px;font-size:10.6px;color:#444;font-weight:normal;transform:scaleX(0.9050);transform-origin:50% 0;">21</div>
<div class="t" style="left:23.10px;top:547.98px;font-size:10.6px;color:#111;font-weight:normal;transform:scaleX(0.8990);transform-origin:0 0;">20182019</div>
<div class="t" style="left:73.80px;top:547.98px;font-size:10.6px;color:#111;font-weight:normal;transform:scaleX(0.9120);transform-origin:0 0;">PS11 Game_2</div>
<div class="t" style="left:143.80px;top:547.98px;font-size:10.6px;color:#111;font-weight:normal;transform:scaleX(0.9240);transform-origin:0 0;">24-08-18</div>
<div class="t" style="left:188.10px;top:547.98px;font-size:10.6px;color:#111;font-weight:normal;transform:scaleX(1.0450);transform-origin:0 0;">Training</div>
<div class="t" style="left:287.80px;top:547.98px;font-size:10.6px;color:#111;font-weight:normal;transform:scaleX(0.9460);transform-origin:0 0;">Player 13</div>
<div class="t" style="left:365.70px;top:547.98px;font-size:10.6px;color:#111;font-weight:normal;transform:scaleX(1.0120);transform-origin:0 0;">Senior</div>
<div class="t" style="left:413.60px;top:547.98px;font-size:10.6px;color:#111;font-weight:normal;transform:scaleX(1.0000);transform-origin:0 0;">Rest</div>
<div class="t" style="left:176.50px;width:400px;text-align:right;top:547.98px;font-size:10.6px;color:#111;font-weight:normal;transform:scaleX(0.9050);transform-origin:100% 0;">2</div>
<div class="t" style="left:263.40px;width:400px;text-align:right;top:547.98px;font-size:10.6px;color:#111;font-weight:normal;transform:scaleX(0.9050);transform-origin:100% 0;">6</div>
<div class="t" style="left:325.30px;width:400px;text-align:right;top:547.98px;font-size:10.6px;color:#111;font-weight:normal;transform:scaleX(0.9070);transform-origin:100% 0;">12:00:52 AM</div>
<div class="t" style="left:-190.00px;width:400px;text-align:center;top:547.98px;font-size:10.6px;color:#444;font-weight:normal;transform:scaleX(0.9050);transform-origin:50% 0;">22</div>
<div class="t" style="left:23.10px;top:563.13px;font-size:10.6px;color:#111;font-weight:normal;transform:scaleX(0.8990);transform-origin:0 0;">20182019</div>
<div class="t" style="left:73.80px;top:563.13px;font-size:10.6px;color:#111;font-weight:normal;transform:scaleX(0.9120);transform-origin:0 0;">PS11 Game_2</div>
<div class="t" style="left:143.80px;top:563.13px;font-size:10.6px;color:#111;font-weight:normal;transform:scaleX(0.9240);transform-origin:0 0;">24-08-18</div>
<div class="t" style="left:188.10px;top:563.13px;font-size:10.6px;color:#111;font-weight:normal;transform:scaleX(1.0450);transform-origin:0 0;">Training</div>
<div class="t" style="left:287.80px;top:563.13px;font-size:10.6px;color:#111;font-weight:normal;transform:scaleX(0.9460);transform-origin:0 0;">Player 8</div>
<div class="t" style="left:365.70px;top:563.13px;font-size:10.6px;color:#111;font-weight:normal;transform:scaleX(0.9360);transform-origin:0 0;">U18</div>
<div class="t" style="left:413.60px;top:563.13px;font-size:10.6px;color:#111;font-weight:normal;transform:scaleX(1.0000);transform-origin:0 0;">Rest</div>
<div class="t" style="left:176.50px;width:400px;text-align:right;top:563.13px;font-size:10.6px;color:#111;font-weight:normal;transform:scaleX(0.9050);transform-origin:100% 0;">2</div>
<div class="t" style="left:263.40px;width:400px;text-align:right;top:563.13px;font-size:10.6px;color:#111;font-weight:normal;transform:scaleX(0.9050);transform-origin:100% 0;">1</div>
<div class="t" style="left:325.30px;width:400px;text-align:right;top:563.13px;font-size:10.6px;color:#111;font-weight:normal;transform:scaleX(0.9070);transform-origin:100% 0;">12:00:52 AM</div>
<div class="t" style="left:-190.00px;width:400px;text-align:center;top:563.13px;font-size:10.6px;color:#444;font-weight:normal;transform:scaleX(0.9050);transform-origin:50% 0;">23</div>
<div class="t" style="left:23.10px;top:578.28px;font-size:10.6px;color:#111;font-weight:normal;transform:scaleX(0.8990);transform-origin:0 0;">20182019</div>
<div class="t" style="left:73.80px;top:578.28px;font-size:10.6px;color:#111;font-weight:normal;transform:scaleX(0.9120);transform-origin:0 0;">PS11 Game_2</div>
<div class="t" style="left:143.80px;top:578.28px;font-size:10.6px;color:#111;font-weight:normal;transform:scaleX(0.9240);transform-origin:0 0;">24-08-18</div>
<div class="t" style="left:188.10px;top:578.28px;font-size:10.6px;color:#111;font-weight:normal;transform:scaleX(1.0450);transform-origin:0 0;">Training</div>
<div class="t" style="left:287.80px;top:578.28px;font-size:10.6px;color:#111;font-weight:normal;transform:scaleX(0.9460);transform-origin:0 0;">Player 3</div>
<div class="t" style="left:365.70px;top:578.28px;font-size:10.6px;color:#111;font-weight:normal;transform:scaleX(0.9360);transform-origin:0 0;">U23</div>
<div class="t" style="left:413.60px;top:578.28px;font-size:10.6px;color:#111;font-weight:normal;transform:scaleX(1.0000);transform-origin:0 0;">Rest</div>
<div class="t" style="left:176.50px;width:400px;text-align:right;top:578.28px;font-size:10.6px;color:#111;font-weight:normal;transform:scaleX(0.9050);transform-origin:100% 0;">2</div>
<div class="t" style="left:263.40px;width:400px;text-align:right;top:578.28px;font-size:10.6px;color:#111;font-weight:normal;transform:scaleX(0.9050);transform-origin:100% 0;">7</div>
<div class="t" style="left:325.30px;width:400px;text-align:right;top:578.28px;font-size:10.6px;color:#111;font-weight:normal;transform:scaleX(0.9070);transform-origin:100% 0;">12:00:52 AM</div>
<div class="t" style="left:-190.00px;width:400px;text-align:center;top:578.28px;font-size:10.6px;color:#444;font-weight:normal;transform:scaleX(0.9050);transform-origin:50% 0;">24</div>
<div class="t" style="left:23.10px;top:593.43px;font-size:10.6px;color:#111;font-weight:normal;transform:scaleX(0.8990);transform-origin:0 0;">20182019</div>
<div class="t" style="left:73.80px;top:593.43px;font-size:10.6px;color:#111;font-weight:normal;transform:scaleX(0.9120);transform-origin:0 0;">PS11 Game_2</div>
<div class="t" style="left:143.80px;top:593.43px;font-size:10.6px;color:#111;font-weight:normal;transform:scaleX(0.9240);transform-origin:0 0;">24-08-18</div>
<div class="t" style="left:188.10px;top:593.43px;font-size:10.6px;color:#111;font-weight:normal;transform:scaleX(1.0450);transform-origin:0 0;">Training</div>
<div class="t" style="left:287.80px;top:593.43px;font-size:10.6px;color:#111;font-weight:normal;transform:scaleX(0.9460);transform-origin:0 0;">Player 9</div>
<div class="t" style="left:365.70px;top:593.43px;font-size:10.6px;color:#111;font-weight:normal;transform:scaleX(0.9360);transform-origin:0 0;">U18</div>
<div class="t" style="left:413.60px;top:593.43px;font-size:10.6px;color:#111;font-weight:normal;transform:scaleX(1.0000);transform-origin:0 0;">Rest</div>
<div class="t" style="left:176.50px;width:400px;text-align:right;top:593.43px;font-size:10.6px;color:#111;font-weight:normal;transform:scaleX(0.9050);transform-origin:100% 0;">2</div>
<div class="t" style="left:263.40px;width:400px;text-align:right;top:593.43px;font-size:10.6px;color:#111;font-weight:normal;transform:scaleX(0.9050);transform-origin:100% 0;">8</div>
<div class="t" style="left:325.30px;width:400px;text-align:right;top:593.43px;font-size:10.6px;color:#111;font-weight:normal;transform:scaleX(0.9070);transform-origin:100% 0;">12:00:52 AM</div>
<div class="t" style="left:-190.00px;width:400px;text-align:center;top:593.43px;font-size:10.6px;color:#444;font-weight:normal;transform:scaleX(0.9050);transform-origin:50% 0;">25</div>
<div class="t" style="left:23.10px;top:608.58px;font-size:10.6px;color:#111;font-weight:normal;transform:scaleX(0.8990);transform-origin:0 0;">20182019</div>
<div class="t" style="left:73.80px;top:608.58px;font-size:10.6px;color:#111;font-weight:normal;transform:scaleX(0.9120);transform-origin:0 0;">PS11 Game_2</div>
<div class="t" style="left:143.80px;top:608.58px;font-size:10.6px;color:#111;font-weight:normal;transform:scaleX(0.9240);transform-origin:0 0;">24-08-18</div>
<div class="t" style="left:188.10px;top:608.58px;font-size:10.6px;color:#111;font-weight:normal;transform:scaleX(1.0450);transform-origin:0 0;">Training</div>
<div class="t" style="left:287.80px;top:608.58px;font-size:10.6px;color:#111;font-weight:normal;transform:scaleX(0.9460);transform-origin:0 0;">Player 10</div>
<div class="t" style="left:365.70px;top:608.58px;font-size:10.6px;color:#111;font-weight:normal;transform:scaleX(1.0120);transform-origin:0 0;">Senior</div>
<div class="t" style="left:413.60px;top:608.58px;font-size:10.6px;color:#111;font-weight:normal;transform:scaleX(0.9500);transform-origin:0 0;">Drill 1</div>
<div class="t" style="left:176.50px;width:400px;text-align:right;top:608.58px;font-size:10.6px;color:#111;font-weight:normal;transform:scaleX(0.9050);transform-origin:100% 0;">3</div>
<div class="t" style="left:263.40px;width:400px;text-align:right;top:608.58px;font-size:10.6px;color:#111;font-weight:normal;transform:scaleX(0.9050);transform-origin:100% 0;">7</div>
<div class="t" style="left:325.30px;width:400px;text-align:right;top:608.58px;font-size:10.6px;color:#111;font-weight:normal;transform:scaleX(0.9070);transform-origin:100% 0;">12:03:21 AM</div>
<div class="t" style="left:-190.00px;width:400px;text-align:center;top:608.58px;font-size:10.6px;color:#444;font-weight:normal;transform:scaleX(0.9050);transform-origin:50% 0;">26</div>
<div class="r" style="left:488px;top:392px;width:88px;height:14px;border:2px solid #217346;"></div>
<div class="r" style="left:577px;top:406px;width:4px;height:4px;background:#217346;border:1px solid #fff;"></div>
<div class="r" style="left:4px;top:140px;width:189px;height:141px;background:#fff;border:1px solid #c8c8c8;box-shadow:1px 1px 2px rgba(0,0,0,0.15);"></div>
<div class="t" style="left:14.40px;top:147.66px;font-size:10.8px;color:#4a4a4a;font-weight:bold;transform:scaleX(0.9720);transform-origin:0 0;">PivotTable</div>
<div class="t" style="left:14.40px;top:170.59px;font-size:11px;color:#4a4a4a;font-weight:normal;transform:scaleX(0.9343);transform-origin:0 0;">Easily arrange and summarize</div>
<div class="t" style="left:14.40px;top:183.79px;font-size:11px;color:#4a4a4a;font-weight:normal;transform:scaleX(0.9632);transform-origin:0 0;">complex data in a PivotTable.</div>
<div class="t" style="left:14.40px;top:210.59px;font-size:11px;color:#4a4a4a;font-weight:normal;transform:scaleX(0.9566);transform-origin:0 0;">FYI: You can double-click a value to</div>
<div class="t" style="left:14.40px;top:223.79px;font-size:11px;color:#4a4a4a;font-weight:normal;transform:scaleX(0.9485);transform-origin:0 0;">see which detailed values make up</div>
<div class="t" style="left:14.40px;top:237.09px;font-size:11px;color:#4a4a4a;font-weight:normal;transform:scaleX(0.9682);transform-origin:0 0;">the summarized total.</div>
<div class="r" style="left:8px;top:254px;width:183px;height:1px;background:#e0e0e0;"></div>
<svg class="r" style="left:13px;top:261px" width="15" height="15" viewBox="0 0 15 15">
<circle cx="7.5" cy="7.5" r="7.2" fill="#3a72b2"/>
<path d="M5.2 5.6a2.3 2.3 0 1 1 3.5 2c-.8.5-1.2.9-1.2 1.9" fill="none" stroke="#fff" stroke-width="1.6"/>
<rect x="6.7" y="10.6" width="1.7" height="1.7" fill="#fff"/>
</svg>
<div class="t" style="left:34.80px;top:264.06px;font-size:10.8px;color:#2d65a3;font-weight:bold;transform:scaleX(1.0012);transform-origin:0 0;">Tell me more</div>
</body></html>
